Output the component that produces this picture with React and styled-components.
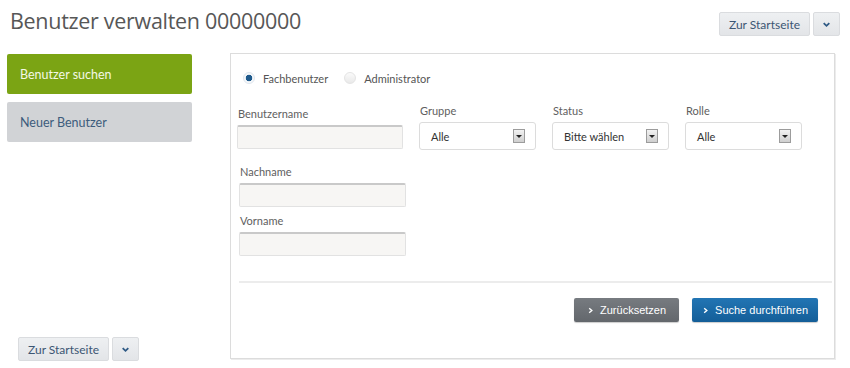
import React from 'react';
import styled, { createGlobalStyle } from 'styled-components';

const GlobalStyle = createGlobalStyle`
    html, body {
        margin: 0;
        padding: 0;
        background: #fff;
    }
    body {
        font-family: Lato, "Noto Sans", sans-serif;
        width: 850px;
        height: 368px;
        overflow: hidden;
    }
`;

const Page = styled.div`
    width: 850px;
    height: 368px;
    display: flex;
    flex-direction: column;
`;

const Header = styled.header`
    display: flex;
    justify-content: space-between;
    align-items: flex-start;
    height: 53px;
    padding: 0 10px 0 10px;
    box-sizing: border-box;
`;

const Title = styled.h1`
    margin: 6px 0 0 0;
    font-family: "Open Sans", sans-serif;
    font-size: 21.5px;
    font-weight: 400;
    color: #575757;
    letter-spacing: -0.3px;
`;

const StartGroup = styled.div`
    display: flex;
    gap: 3px;
    margin-top: ${p => p.$top || 0}px;
`;

const GrayButton = styled.button`
    height: 24px;
    padding: 0 ${p => p.$pad || 10}px;
    border: 1px solid #dadcdf;
    border-radius: 2px;
    background: linear-gradient(#eef0f2, #e3e5e8);
    color: #3c5673;
    font-family: Lato, sans-serif;
    font-size: 12px;
    display: flex;
    align-items: center;
    justify-content: center;
    cursor: pointer;
`;

const Main = styled.div`
    display: flex;
    flex: 1;
    padding-left: 7px;
`;

const Sidebar = styled.nav`
    width: 185px;
    display: flex;
    flex-direction: column;
    gap: 8px;
    padding-top: 1px;
`;

const NavItem = styled.div`
    height: 40px;
    border-radius: 2px;
    display: flex;
    align-items: center;
    padding-left: 13px;
    font-size: 12.5px;
    background: ${p => (p.$active ? '#7ba414' : '#d1d3d6')};
    color: ${p => (p.$active ? '#f4f8e6' : '#3d5c7c')};
`;

const SidebarFoot = styled.div`
    margin-top: auto;
    padding: 0 0 7px 11px;
`;

const Panel = styled.section`
    margin-left: 38px;
    width: 605px;
    height: 306px;
    border: 1px solid #dcdcdc;
    box-shadow: 1px 1px 0 #ececec;
    box-sizing: border-box;
    padding: 0 0 0 6px;
    display: flex;
    flex-direction: column;
`;

const RadioRow = styled.div`
    display: flex;
    align-items: center;
    margin: 16px 0 0 6px;
    height: 16px;
`;

const RadioLabel = styled.label`
    display: flex;
    align-items: center;
    gap: 8px;
    margin-right: 16px;
    font-size: 11px;
    color: #555;
`;

const RadioDot = styled.span`
    width: 12px;
    height: 12px;
    border-radius: 50%;
    box-sizing: border-box;
    border: 1px solid ${p => (p.$checked ? '#dfe6ee' : '#e4e4e4')};
    background: ${p => (p.$checked
        ? 'radial-gradient(circle, #1f5a8c 0, #1f5a8c 3px, #f6f8fa 3.6px)'
        : 'linear-gradient(#fafafa, #e9e9e9)')};
`;

const FieldRow = styled.div`
    display: flex;
    gap: 16px;
    margin-top: ${p => p.$top || 0}px;
`;

const Field = styled.div`
    display: flex;
    flex-direction: column;
    width: ${p => p.$width}px;
    margin-top: ${p => p.$offset || 0}px;
    margin-left: ${p => p.$left || 0}px;
`;

const Label = styled.span`
    font-size: 11px;
    color: #606060;
    margin-left: 1px;
    height: 17px;
    line-height: 12px;
`;

const TextInput = styled.div`
    height: 24px;
    box-sizing: border-box;
    background: #f7f6f4;
    border: 1px solid #e2e2e2;
    border-top: 2px solid #c9c9c9;
    border-radius: 2px;
`;

const Select = styled.div`
    height: 28px;
    box-sizing: border-box;
    background: #fff;
    border: 1px solid #dcdcdc;
    border-radius: 3px;
    display: flex;
    align-items: center;
    justify-content: space-between;
    padding: 0 10px 0 11px;
    font-size: 11px;
    color: #333;
`;

const SelectArrow = styled.span`
    width: 12px;
    height: 14px;
    box-sizing: border-box;
    border: 1px solid #9c9c9c;
    background: linear-gradient(#f2f2f2, #cfcfcf);
    display: flex;
    align-items: center;
    justify-content: center;
    &::after {
        content: '';
        border-left: 3px solid transparent;
        border-right: 3px solid transparent;
        border-top: 3px solid #222;
    }
`;

const Divider = styled.hr`
    margin: 25px 2px 0 2px;
    border: 0;
    border-top: 2px solid #ececec;
`;

const Actions = styled.div`
    display: flex;
    justify-content: flex-end;
    gap: 13px;
    margin: 15px 16px 0 0;
`;

const ActionButton = styled.button`
    height: 24px;
    border: 0;
    border-radius: 2px;
    padding: 0 ${p => p.$pad}px;
    font-family: "Liberation Sans", Arial, sans-serif;
    font-size: 11px;
    color: #fff;
    display: flex;
    align-items: center;
    gap: 6px;
    background: ${p => (p.$primary
        ? 'linear-gradient(#2275b4, #145e98)'
        : 'linear-gradient(#777b80, #63676c)')};
    box-shadow: 0 1px 1px rgba(0, 0, 0, 0.2);
    cursor: pointer;
`;

const Chevron = ({ dir = 'right', color = '#fff', size = 7 }) => (
    <svg width={size} height={size} viewBox="0 0 8 8">
        {dir === 'right'
            ? <path d="M2.5 1.5 L5.5 4 L2.5 6.5" fill="none" stroke={color} strokeWidth="1.6" />
            : <path d="M1.5 2.8 L4 5.2 L6.5 2.8" fill="none" stroke={color} strokeWidth="1.6" />}
    </svg>
);

const StartButtons = ({ top }) => (
    <StartGroup $top={top}>
        <GrayButton $pad={9}>Zur Startseite</GrayButton>
        <GrayButton $pad={8}><Chevron dir="down" color="#2f5a85" size={9} /></GrayButton>
    </StartGroup>
);

const selects = [
    { label: 'Gruppe', value: 'Alle' },
    { label: 'Status', value: 'Bitte wählen' },
    { label: 'Rolle', value: 'Alle' },
];

export default function App() {
    return (
        <Page>
            <GlobalStyle />
            <Header>
                <Title>Benutzer verwalten 00000000</Title>
                <StartButtons top={12} />
            </Header>
            <Main>
                <Sidebar>
                    <NavItem $active>Benutzer suchen</NavItem>
                    <NavItem>Neuer Benutzer</NavItem>
                    <SidebarFoot>
                        <StartButtons />
                    </SidebarFoot>
                </Sidebar>
                <Panel>
                    <RadioRow>
                        <RadioLabel><RadioDot $checked />Fachbenutzer</RadioLabel>
                        <RadioLabel><RadioDot />Administrator</RadioLabel>
                    </RadioRow>
                    <FieldRow $top={19}>
                        <Field $width={166} $offset={3}>
                            <Label>Benutzername</Label>
                            <TextInput />
                        </Field>
                        {selects.map(s => (
                            <Field key={s.label} $width={117}>
                                <Label>{s.label}</Label>
                                <Select>
                                    {s.value}
                                    <SelectArrow />
                                </Select>
                            </Field>
                        ))}
                    </FieldRow>
                    <FieldRow $top={16}>
                        <Field $width={167} $left={2}>
                            <Label>Nachname</Label>
                            <TextInput />
                        </Field>
                    </FieldRow>
                    <FieldRow $top={8}>
                        <Field $width={167} $left={2}>
                            <Label>Vorname</Label>
                            <TextInput />
                        </Field>
                    </FieldRow>
                    <Divider />
                    <Actions>
                        <ActionButton $pad={13}><Chevron />Zurücksetzen</ActionButton>
                        <ActionButton $primary $pad={10}><Chevron />Suche durchführen</ActionButton>
                    </Actions>
                </Panel>
            </Main>
        </Page>
    );
}
